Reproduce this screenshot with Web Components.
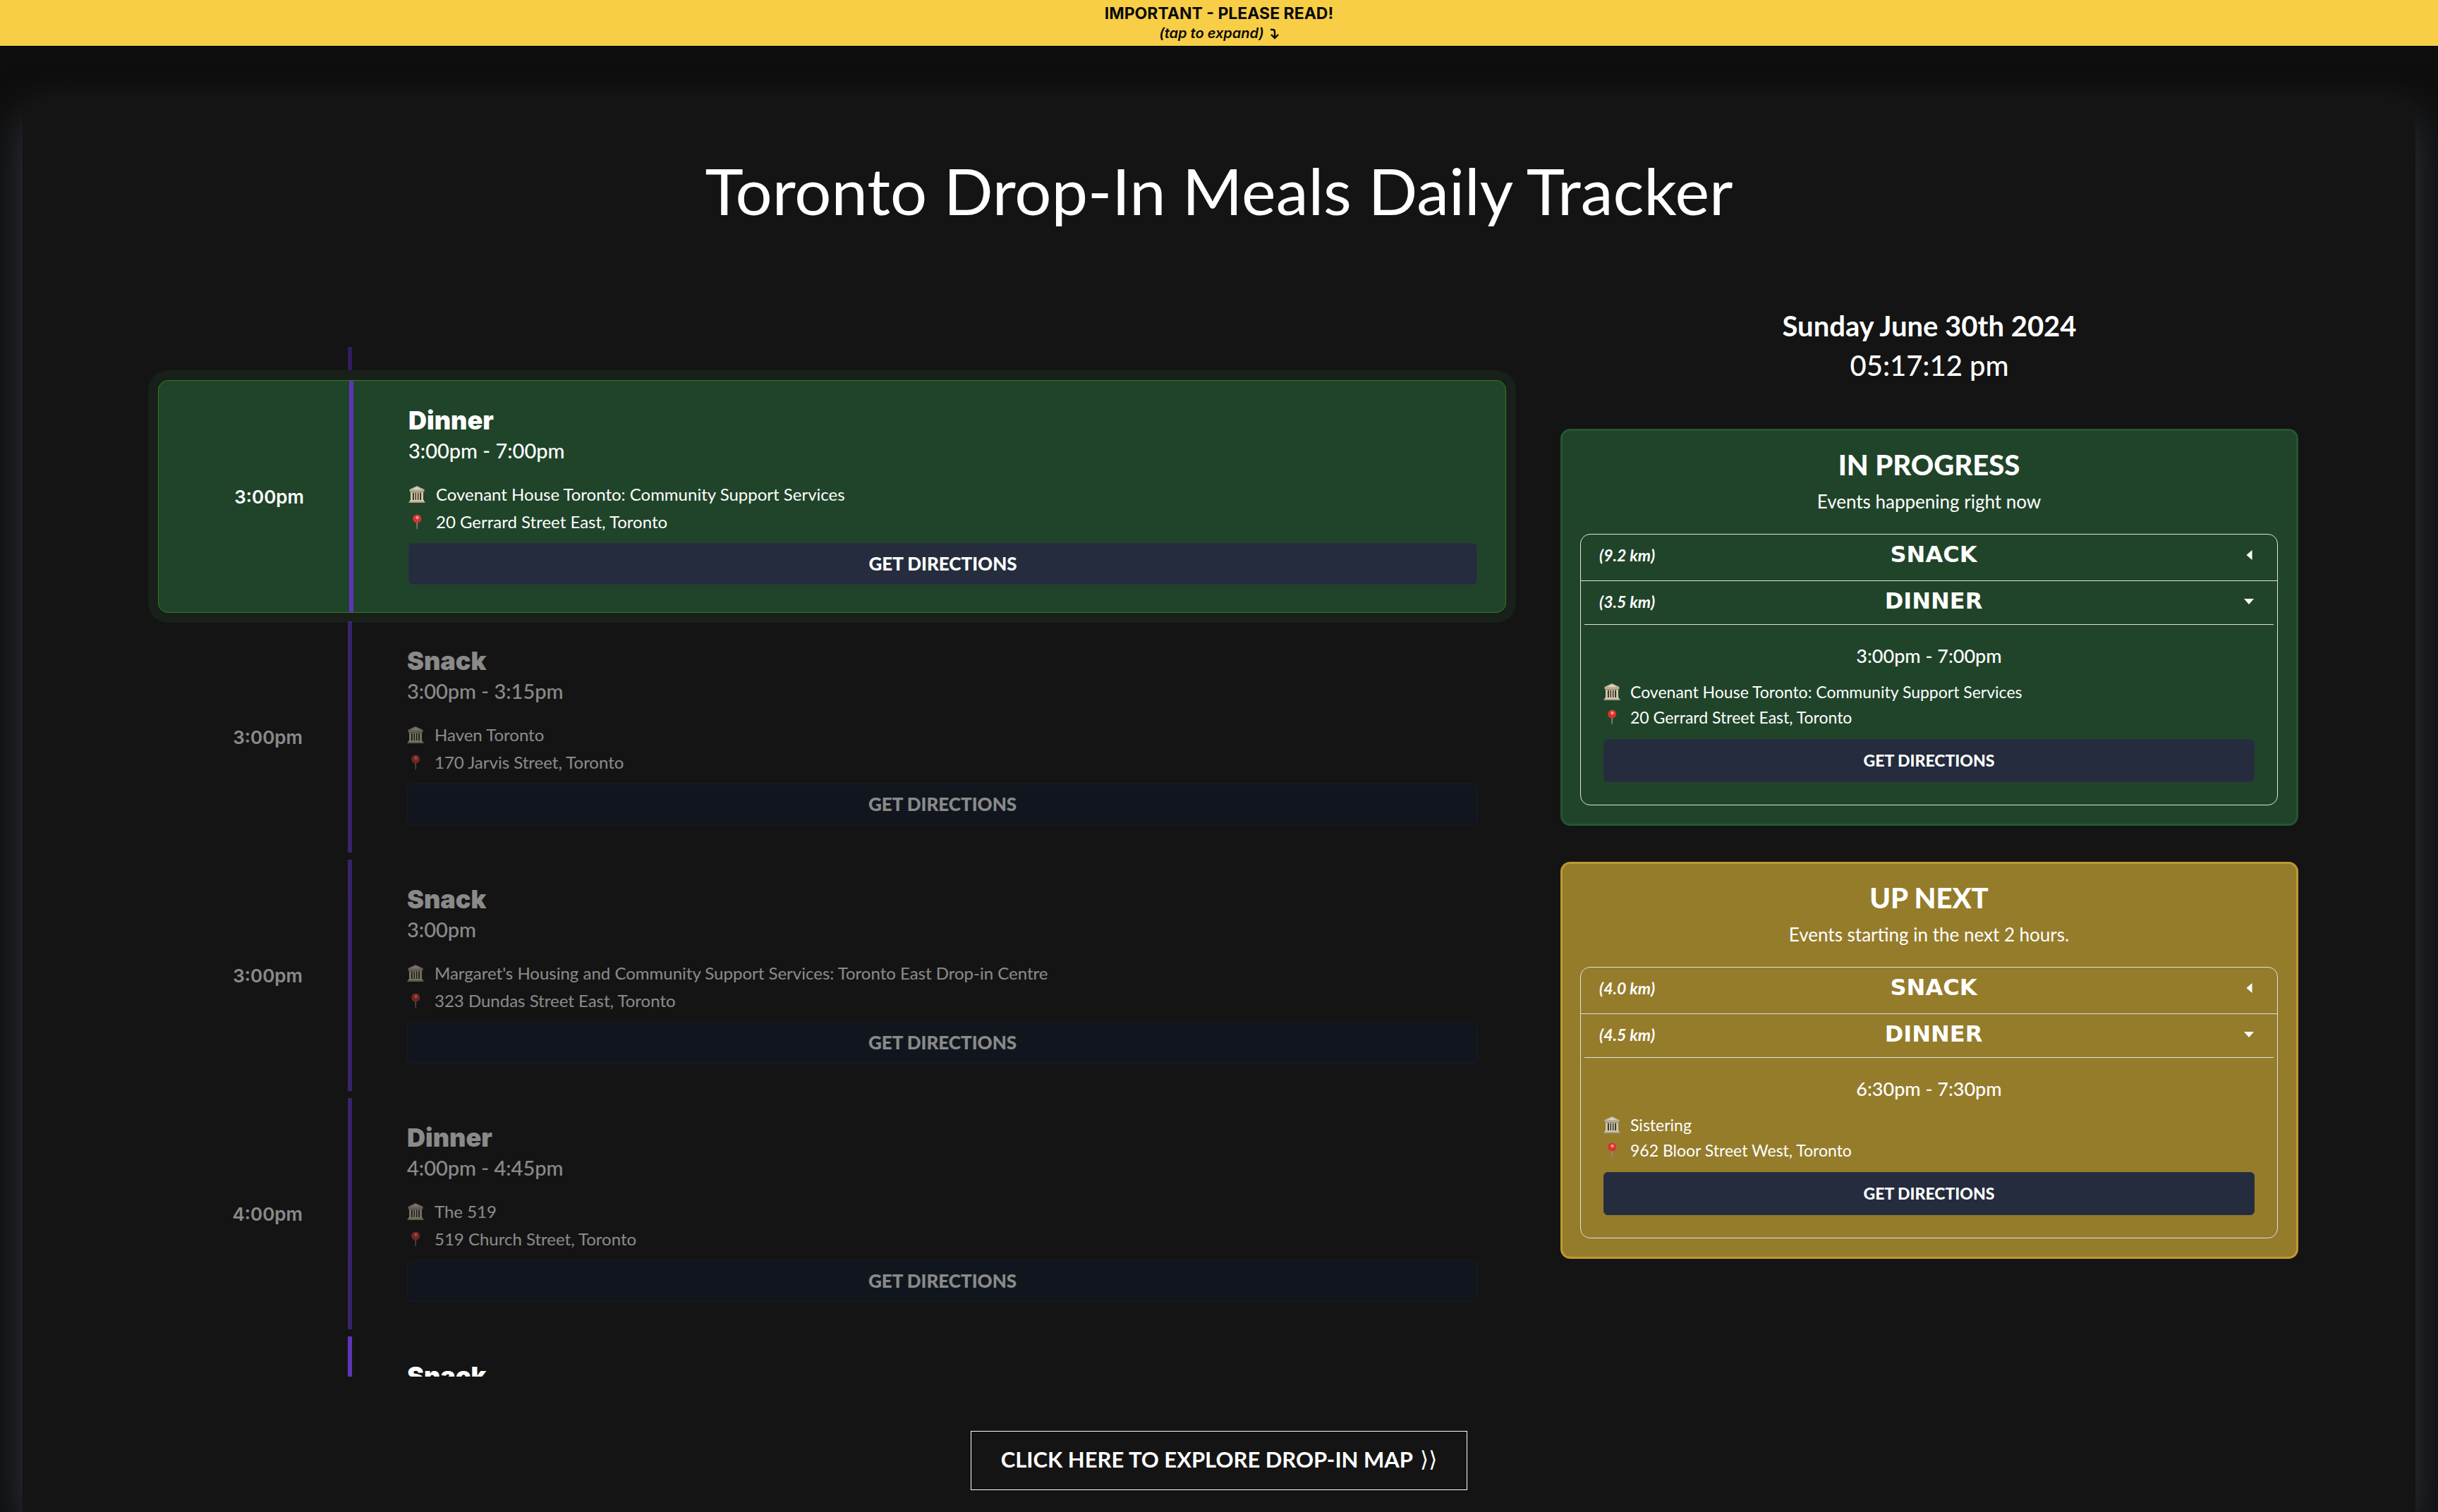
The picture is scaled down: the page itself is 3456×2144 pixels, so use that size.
<!DOCTYPE html>
<html lang="en">
<head>
<meta charset="utf-8">
<title>Toronto Drop-In Meals Daily Tracker</title>
<style>
body{margin:0;background:#0e0e0e;color:#fff;font-family:Lato,"Open Sans",sans-serif}
</style>
</head>
<body>
<tracker-app></tracker-app>
<script>
const define = (name, html) => {
  const t = document.createElement('template');
  t.innerHTML = html;
  customElements.define(name, class extends HTMLElement {
    constructor(){
      super();
      this.attachShadow({mode:'open'}).append(t.content.cloneNode(true));
    }
  });
};

define('notice-banner', `
<style>
:host{display:block;border-bottom:1px solid #000;background:#f7ce46}
button{display:block;width:100%;border:0;margin:0;padding:4px 0;background:none;color:#0b0b0b;font-family:Inter,sans-serif;cursor:pointer}
strong{display:block;font-size:23px;line-height:30px;font-weight:700}
em{display:flex;justify-content:center;align-items:center;gap:8px;font-size:20px;line-height:27px;font-weight:600}
</style>
<button type="button"><strong>IMPORTANT - PLEASE READ!</strong>
<em>(tap to expand)<svg width="13" height="16" viewBox="0 0 13 16" fill="none" stroke="currentColor" stroke-width="2.4"><path d="M1 2h3q3 0 3 3v8M2 9l5 5 5-5"/></svg></em></button>`);

define('museum-icon', `
<style>:host{display:block;width:24px;height:24px}svg{display:block}</style>
<svg width="24" height="24" viewBox="0 0 24 24" aria-hidden="true">
<rect x="3" y="8" width="18" height="13" fill="#251f18"/>
<path d="M12 0 22.500 5v3h-21V5z" fill="#b9b095"/><path d="M12 1.500 19 5H5z" fill="#dcd5bd"/>
<path d="M2.500 8h19v2h-19z" fill="#8f876d"/>
<path d="M3 9h3v12H3zM7.700 9h2v12h-2zM11 9h2v12h-2zM14.300 9h2v12h-2zM18 9h3v12h-3z" fill="#cfc7ad"/>
<path d="M2 20h20v2H2z" fill="#d3ccb3"/><path d="M.5 22h23v2H.5z" fill="#aaa185"/></svg>`);

define('pin-icon', `
<style>:host{display:block;width:24px;height:24px}svg{display:block}</style>
<svg width="24" height="24" viewBox="0 0 24 24" aria-hidden="true">
<path d="M11.200 11h2l-.5 11.500h-1z" fill="#9b8a84"/>
<circle cx="12.200" cy="7.500" r="6" fill="#d5352f"/><circle cx="12.500" cy="6" r="2.200" fill="#f39a8e"/></svg>`);

define('place-rows', `
<style>
:host{display:block;font-size:var(--row-size,24px);line-height:var(--row-line,39px);font-weight:400}
div{display:grid;grid-template-columns:24px 1fr;column-gap:var(--row-gap,15px);align-items:center}
</style>
<div><museum-icon></museum-icon><slot name="place"></slot></div>
<div><pin-icon></pin-icon><slot name="address"></slot></div>`);

define('directions-link', `
<style>
:host{display:block}
a{display:block;box-sizing:border-box;border:1px solid var(--link-edge,#2d3040);border-radius:6px;background:var(--link-bg,#242c3d);color:#fff;text-align:center;text-decoration:none;font-weight:900;font-size:var(--link-size,26px);line-height:var(--link-line,57px)}
</style><a href="#directions">GET DIRECTIONS</a>`);

define('timeline-item', `
<style>
:host{display:flex;box-sizing:border-box;min-height:328px;flex:none}
:host([state=past]){opacity:.5;--link-bg:#101828;--link-edge:#1c222c}
:host([state=now]){margin:1px 0 2px 1px;border:1px solid #35791f;border-radius:14px;background:#20442a;box-shadow:0 0 0 14px #182019}
.time{display:flex;flex:none;box-sizing:border-box;width:270px;padding:2px 64px 0 0;align-items:center;justify-content:flex-end;font:600 26px/36px Inter,sans-serif}
.body{flex:1;min-width:0;border-left:6px solid #5c35b9;padding:35px 40px 39px 78px}
</style>
<div class="time"><slot name="time"></slot></div>
<div class="body"><slot></slot></div>`);

define('meal-timeline', `
<style>
:host{display:flex;flex-direction:column;gap:10px;box-sizing:border-box;height:1460px;margin-top:58px;padding:0 14px;overflow:hidden}
.tail{flex:none;height:36px;margin-left:270px;border-left:6px solid #321c5e}
h3{margin:0;font-family:Inter,sans-serif;font-size:36px;line-height:42px;font-weight:900}
p{margin:0 0 20px;font-size:29px;line-height:44px;font-weight:500}
directions-link{margin-top:11px}
</style>
<div class="tail"></div>
<timeline-item state="now"><span slot="time">3:00pm</span><h3>Dinner</h3><p>3:00pm - 7:00pm</p>
<place-rows><span slot="place">Covenant House Toronto: Community Support Services</span><span slot="address">20 Gerrard Street East, Toronto</span></place-rows><directions-link></directions-link></timeline-item>
<timeline-item state="past"><span slot="time">3:00pm</span><h3>Snack</h3><p>3:00pm - 3:15pm</p>
<place-rows><span slot="place">Haven Toronto</span><span slot="address">170 Jarvis Street, Toronto</span></place-rows><directions-link></directions-link></timeline-item>
<timeline-item state="past"><span slot="time">3:00pm</span><h3>Snack</h3><p>3:00pm</p>
<place-rows><span slot="place">Margaret's Housing and Community Support Services: Toronto East Drop-in Centre</span><span slot="address">323 Dundas Street East, Toronto</span></place-rows><directions-link></directions-link></timeline-item>
<timeline-item state="past"><span slot="time">4:00pm</span><h3>Dinner</h3><p>4:00pm - 4:45pm</p>
<place-rows><span slot="place">The 519</span><span slot="address">519 Church Street, Toronto</span></place-rows><directions-link></directions-link></timeline-item>
<timeline-item><h3>Snack</h3></timeline-item>`);

define('meal-toggle', `
<style>
:host{display:block}
button{display:grid;grid-template-columns:100px 1fr 80px;align-items:center;width:100%;height:57px;margin:0;border:0;padding:0 33px 0 26px;background:none;color:#fff;font-family:Lato,sans-serif;text-align:center;cursor:pointer}
.far{text-align:left;font-size:23px;font-style:italic;font-weight:700}
.name{font:700 32px/57px "DejaVu Sans",sans-serif}
svg{justify-self:end}
.down{display:none}
:host([open]) .down{display:block}
:host([open]) .left{display:none}
</style>
<button type="button"><span class="far"><slot name="far"></slot></span><span class="name"><slot></slot></span>
<svg class="left" width="14" height="14" viewBox="0 0 14 14" fill="#fff"><path d="M11.500 0v14L3.500 7z"/></svg>
<svg class="down" width="14" height="14" viewBox="0 0 14 14" fill="#fff"><path d="M0 3h14L7 11z"/></svg></button>`);

define('event-panel', `
<style>
:host{display:block;border:3px solid var(--edge);border-radius:14px;background:var(--fill);padding:24px 26px 26px 25px;text-align:center;--row-size:23px;--row-line:36px;--row-gap:14px;--link-size:23px;--link-line:59px}
h2{margin:0;font-size:40px;line-height:48px;font-weight:900}
p{margin:8px 0 26px;font-size:26px;line-height:40px;font-weight:400}
.box{border:1px solid #dfe3dc;border-radius:14px}
.first{padding-bottom:8px;border-bottom:1px solid #dfe3dc}
.second{margin:0 5px;border-bottom:1px solid #dfe3dc;padding-bottom:4px}
.second ::slotted(*){margin:0 -5px}
.body{padding:24px 32px 32px}
.when{font-size:27px;line-height:40px;font-weight:500;margin-bottom:13px}
</style>
<h2><slot name="title"></slot></h2><p><slot name="note"></slot></p>
<div class="box">
<div class="first"><slot name="first"></slot></div>
<div class="second"><slot name="second"></slot></div>
<div class="body"><div class="when"><slot name="when"></slot></div><slot></slot></div>
</div>`);

define('tracker-side', `
<style>
:host{display:block}
header{margin-bottom:62px;text-align:center;font-size:40px;line-height:56px;font-weight:500}
header div:first-child{font-weight:700}
event-panel+event-panel{margin-top:51px}
place-rows{text-align:left}
directions-link{margin-top:13px}
.now{--fill:#20442a;--edge:#265532}
.next{--fill:#957c2b;--edge:#bf9930}
</style>
<header><div>Sunday June 30th 2024</div><div>05:17:12 pm</div></header>
<event-panel class="now"><span slot="title">IN PROGRESS</span><span slot="note">Events happening right now</span>
<meal-toggle slot="first"><span slot="far">(9.2 km)</span>SNACK</meal-toggle>
<meal-toggle slot="second" open><span slot="far">(3.5 km)</span>DINNER</meal-toggle>
<span slot="when">3:00pm - 7:00pm</span>
<place-rows><span slot="place">Covenant House Toronto: Community Support Services</span><span slot="address">20 Gerrard Street East, Toronto</span></place-rows><directions-link></directions-link></event-panel>
<event-panel class="next"><span slot="title">UP NEXT</span><span slot="note">Events starting in the next 2 hours.</span>
<meal-toggle slot="first"><span slot="far">(4.0 km)</span>SNACK</meal-toggle>
<meal-toggle slot="second" open><span slot="far">(4.5 km)</span>DINNER</meal-toggle>
<span slot="when">6:30pm - 7:30pm</span>
<place-rows><span slot="place">Sistering</span><span slot="address">962 Bloor Street West, Toronto</span></place-rows><directions-link></directions-link></event-panel>`);

define('tracker-app', `
<style>
:host{display:block}
.stage{overflow:hidden;padding:76px 32px 0}
main{border-radius:16px 16px 0 0;background:#141414;box-shadow:0 24px 64px 0 #32363f;padding:70px 0 31px;text-align:center}
h1{margin:0 0 106px;font-size:92px;line-height:116px;font-weight:400}
.cols{display:grid;grid-template-columns:minmax(0,1940fr) minmax(0,1046fr);column-gap:63px;align-items:start;margin:0 166px 0 177px;text-align:left}
.map{display:inline-flex;align-items:center;gap:10px;margin-top:77px;border:1px solid #fff;padding:0 42px 4px;color:#fff;text-decoration:none;font-size:31px;line-height:78px;font-weight:700}
.map span{font-family:"DejaVu Sans",sans-serif;font-weight:400}
</style>
<notice-banner></notice-banner>
<div class="stage"><main>
<h1>Toronto Drop-In Meals Daily Tracker</h1>
<div class="cols"><meal-timeline></meal-timeline><tracker-side></tracker-side></div>
<a class="map" href="#map">CLICK HERE TO EXPLORE DROP-IN MAP <span>⟩⟩</span></a>
</main></div>`);
</script>
</body>
</html>
